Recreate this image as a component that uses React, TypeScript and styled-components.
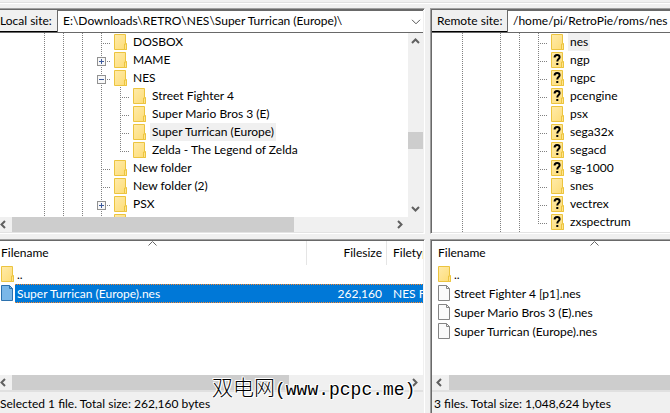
import React from "react";
import styled, { createGlobalStyle, css } from "styled-components";

const GlobalStyle = createGlobalStyle`
  * { box-sizing: border-box; }
  body {
    margin: 0;
    background: #f0f0f0;
    color: #000;
    font: 12px/18px Lato, "Open Sans", sans-serif;
  }
  button, select { font: inherit; color: inherit; }
`;

const Window = styled.main`
  position: relative;
  display: flex;
  flex-direction: column;
  min-height: 100vh;
  overflow: hidden;
`;

const ToolbarEdge = styled.div`
  height: 4px;
  margin-bottom: 4px;
  background: #fff;
  border-top: 2px solid #f0f0f0;
  box-shadow: inset 0 1px #e0e0e0;
`;

const Panes = styled.div`
  flex: 1;
  display: grid;
  grid-template-columns: minmax(0, 425fr) minmax(0, 240fr);
  grid-template-rows: auto 1fr;
  gap: 5px;
`;

const Pane = styled.section<{ $edge?: boolean }>`
  display: flex;
  flex-direction: column;
  min-width: 0;
  overflow: hidden;
  border-top: 1px solid #a0a0a0;
  box-shadow: inset 0 1px #696969;
  padding-top: 1px;
  border-bottom: 1px solid #fff;
  ${(p) =>
    p.$edge
      ? css`
          border-left: 1px solid #a0a0a0;
          box-shadow: inset 1px 1px #696969;
          padding-left: 1px;
        `
      : css`
          border-right: 1px solid #fff;
          padding-right: 1px;
        `}
`;

const ListPane = styled(Pane)`
  border-bottom: 0;
`;

const SiteBar = styled.div`
  display: flex;
  height: 23px;
  border-bottom: 1px solid #696969;
`;

const SiteLabel = styled.label<{ $inset?: boolean }>`
  flex: none;
  width: ${(p) => (p.$inset ? 75 : 57)}px;
  padding-left: ${(p) => (p.$inset ? 5 : 0)}px;
  line-height: 22px;
  background: #f0f0f0;
  box-shadow: inset 0 -1px #000;
  white-space: nowrap;
`;

const Combo = styled.div`
  position: relative;
  flex: 1;
  min-width: 0;
  display: flex;
  background: #fff;
  border-left: 1px solid #696969;
  box-shadow: inset 0 1px #696969;
`;

const PathSelect = styled.select`
  appearance: none;
  flex: 1;
  min-width: 0;
  border: 0;
  outline: 0;
  padding: 0 0 0 5px;
  height: 22px;
  line-height: 22px;
  background: transparent;
`;

const ComboArrow = styled.svg`
  position: absolute;
  right: 2px;
  top: 9px;
  pointer-events: none;
`;

const TreeArea = styled.div<{ $bars?: boolean }>`
  display: grid;
  grid-template-columns: minmax(0, 1fr) ${(p) => (p.$bars ? "15px" : "")};
  grid-template-rows: ${(p) => (p.$bars ? "184px 15px" : "199px")};
  background: #fff;
  border-bottom: 1px solid #e3e3e3;
`;

const Tree = styled.ul<{ $indent: number }>`
  margin: 0;
  padding: 0 0 0 ${(p) => p.$indent}px;
  list-style: none;
  overflow: hidden;
`;

const TreeRow = styled.li`
  display: flex;
  height: 18px;
  white-space: nowrap;
`;

const vDots = "repeating-linear-gradient(to bottom, #808080 0 1px, transparent 1px 2px)";
const hDots = "repeating-linear-gradient(to right, #808080 0 1px, transparent 1px 2px)";

/* b: blank, g: guide, t: branch, l: last branch */
const Guide = styled.span<{ $kind: string }>`
  flex: none;
  width: 19px;
  padding: 6px 0 0 5px;
  line-height: 0;
  background-repeat: no-repeat;
  ${(p) =>
    p.$kind === "g" &&
    css`
      background-image: ${vDots};
      background-size: 1px 100%;
      background-position: 9px 0;
    `}
  ${(p) =>
    (p.$kind === "t" || p.$kind === "l") &&
    css`
      background-image: ${vDots}, ${hDots};
      background-size: 1px ${p.$kind === "t" ? "100%" : "11px"}, 10px 1px;
      background-position: 9px 0, 9px 10px;
    `}
`;

const Toggle = styled.button`
  display: block;
  width: 9px;
  height: 9px;
  padding: 0;
  border: 0;
  background: #fff;
  line-height: 0;
`;

const IconCell = styled.span`
  flex: none;
  width: 20px;
  padding: 1px 0 0 3px;
  line-height: 0;
`;

const TreeLabel = styled.span<{ $on?: boolean }>`
  padding: 0 2px;
  background: ${(p) => (p.$on ? "#f0f0f0" : "transparent")};
`;

const Bar = styled.div<{ $vertical?: boolean }>`
  display: flex;
  flex: none;
  flex-direction: ${(p) => (p.$vertical ? "column" : "row")};
  ${(p) => (p.$vertical ? "width" : "height")}: 15px;
  background: #f0f0f0;
  overflow: hidden;
`;

const Corner = styled.div`
  background: #f0f0f0;
`;

const Step = styled.button<{ $size: number; $start?: boolean }>`
  display: flex;
  flex: 0 0 ${(p) => p.$size}px;
  align-items: center;
  justify-content: ${(p) => (p.$start ? "flex-start" : "center")};
  padding: 0;
  border: 0;
  background: transparent;
`;

const Track = styled.div<{ $before: number; $thumb: number; $after: number; $vertical?: boolean }>`
  flex: 1;
  display: grid;
  ${(p) => (p.$vertical ? "grid-template-rows" : "grid-template-columns")}:
    ${(p) => p.$before}fr ${(p) => p.$thumb}fr ${(p) => p.$after}fr;
`;

const Thumb = styled.div<{ $vertical?: boolean }>`
  background: #cdcdcd;
  ${(p) => (p.$vertical ? "grid-row" : "grid-column")}: 2;
`;

const ListArea = styled.div`
  flex: 1;
  position: relative;
  background: #fff;
  overflow: hidden;
`;

const FileTable = styled.table`
  width: 100%;
  min-width: 323px;
  table-layout: fixed;
  border-collapse: collapse;
`;

const Col = styled.col<{ $w?: number }>`
  width: ${(p) => (p.$w ? `${p.$w}px` : "auto")};
`;

const Head = styled.th<{ $pad: number; $right?: boolean; $line?: boolean }>`
  position: relative;
  height: 24px;
  padding: 0 5px 0 ${(p) => p.$pad}px;
  font-weight: 400;
  text-align: ${(p) => (p.$right ? "right" : "left")};
  white-space: nowrap;
  box-shadow: ${(p) => (p.$line ? "inset -1px 0 #e5e5e5" : "none")};
`;

const SortMark = styled.svg<{ $shift?: boolean }>`
  position: absolute;
  top: 0;
  left: calc(50% - ${(p) => (p.$shift ? 6 : 4)}px);
`;

const selected = css`
  color: #fff;
  background:
    repeating-linear-gradient(to right, #ff8728 0 1px, #0078d7 1px 2px) 0 0 / 100% 1px no-repeat,
    repeating-linear-gradient(to right, #ff8728 0 1px, #0078d7 1px 2px) 0 100% / 100% 1px no-repeat,
    #0078d7;
`;

const Cell = styled.td<{ $pad?: number; $right?: boolean; $on?: boolean }>`
  height: 19px;
  padding: 0 ${(p) => (p.$right ? 5 : 0)}px 0 ${(p) => p.$pad ?? 0}px;
  text-align: ${(p) => (p.$right ? "right" : "left")};
  white-space: nowrap;
  overflow: hidden;
  ${(p) => p.$on && selected}
`;

const FileLine = styled.div`
  display: flex;
  height: 19px;
`;

const FileIcon = styled.span`
  flex: none;
  width: 14px;
  padding-top: 1px;
  line-height: 0;
`;

const FileName = styled.span<{ $on?: boolean }>`
  flex: 1;
  padding-left: 2px;
  line-height: 19px;
  ${(p) => p.$on && selected}
`;

const Status = styled.footer<{ $inset?: boolean }>`
  height: 23px;
  padding: 3px 0 0 ${(p) => (p.$inset ? 2 : 0)}px;
  border-top: 2px solid #e0e0e0;
  background: #f0f0f0;
  white-space: nowrap;
`;

const Watermark = styled.div`
  position: absolute;
  left: 212px;
  bottom: 10px;
  font: 300 21px/26px "Noto Sans CJK SC", sans-serif;
  white-space: nowrap;
  text-shadow: 1px 0 #fff, -1px 0 #fff, 0 1px #fff, 0 -1px #fff, 1px 1px #fff, -1px -1px #fff;
  pointer-events: none;
`;

const WatermarkUrl = styled.span`
  font: 18px/26px "Liberation Mono", monospace;
`;

const Folder = ({ unknown = false }: { unknown?: boolean }) => (
  <svg width="13" height="16" viewBox="0 0 13 16">
    <defs>
      <linearGradient id="folder" x1="0" y1="0" x2="1" y2="1">
        <stop offset="0" stopColor="#ffebaa" />
        <stop offset="1" stopColor="#fddc75" />
      </linearGradient>
    </defs>
    <path d="M.5.5h11v9h1v6H.5z" fill="url(#folder)" stroke="#ecc43f" />
    <path d="M10.5 15.5v-5.5h2v5.5z" fill="#ffe48c" stroke="#ecc43f" />
    {unknown && (
      <path
        d="M3.6 5.6C3.6 3.6 4.7 3 6.1 3c1.500 0 2.500.8 2.500 2.200 0 1.900-2.300 1.800-2.300 4.300M5.300 12h2"
        fill="none"
        stroke="#000"
        strokeWidth="2"
      />
    )}
  </svg>
);

const Page = ({ on = false }: { on?: boolean }) => (
  <svg width="12" height="16" viewBox="0 0 12 16">
    <path d="M.5.5h8l3 3v12H.5z" fill={on ? "#7ab7e8" : "#fafafa"} stroke={on ? "#2c71ad" : "#858585"} />
    <path d="M8.500.5v3h3" fill="none" stroke={on ? "#2c71ad" : "#858585"} />
  </svg>
);

const PlusMinus = ({ open }: { open: boolean }) => (
  <svg width="9" height="9" viewBox="0 0 9 9" shapeRendering="crispEdges">
    <rect x=".5" y=".5" width="8" height="8" fill="#f8f8f8" stroke="#919191" />
    <path d={open ? "M2 4.500h5" : "M2 4.500h5M4.500 2v5"} stroke="#3d5a9c" />
  </svg>
);

const arrows = {
  up: "M1 6l3.500-3.500L8 6",
  down: "M1 3l3.500 3.500L8 3",
  left: "M5 1L1.500 4.500 5 8",
  right: "M3 1l3.500 3.500L3 8",
};

const Arrow = ({ dir }: { dir: keyof typeof arrows }) => (
  <svg width="9" height="9" viewBox="0 0 9 9">
    <path d={arrows[dir]} fill="none" stroke="#606060" strokeWidth="2" />
  </svg>
);

type Node = { g: string; name: string; unknown?: boolean; on?: boolean; open?: boolean };

const localTree: Node[] = [
  { g: "gggt", name: "DOSBOX" },
  { g: "gggt", name: "MAME", open: false },
  { g: "gggt", name: "NES", open: true },
  { g: "ggggt", name: "Street Fighter 4" },
  { g: "ggggt", name: "Super Mario Bros 3 (E)" },
  { g: "ggggt", name: "Super Turrican (Europe)", on: true },
  { g: "ggggl", name: "Zelda - The Legend of Zelda" },
  { g: "gggt", name: "New folder" },
  { g: "gggt", name: "New folder (2)" },
  { g: "gggt", name: "PSX", open: false },
  { g: "gggt", name: "" },
];

const remoteTree: Node[] = [
  { g: "gbggt", name: "nes", on: true },
  { g: "gbggt", name: "ngp", unknown: true },
  { g: "gbggt", name: "ngpc", unknown: true },
  { g: "gbggt", name: "pcengine", unknown: true },
  { g: "gbggt", name: "psx" },
  { g: "gbggt", name: "sega32x", unknown: true },
  { g: "gbggt", name: "segacd", unknown: true },
  { g: "gbggt", name: "sg-1000", unknown: true },
  { g: "gbggt", name: "snes" },
  { g: "gbggt", name: "vectrex", unknown: true },
  { g: "gbggl", name: "zxspectrum", unknown: true },
  { g: "gbgt", name: "" },
];

const TreeView = ({ nodes, indent }: { nodes: Node[]; indent: number }) => (
  <Tree $indent={indent}>
    {nodes.map((n, i) => (
      <TreeRow key={i}>
        {[...n.g].map((kind, k) => (
          <Guide key={k} $kind={kind}>
            {n.open !== undefined && k === n.g.length - 1 && (
              <Toggle aria-label={`${n.open ? "Collapse" : "Expand"} ${n.name}`}>
                <PlusMinus open={n.open} />
              </Toggle>
            )}
          </Guide>
        ))}
        <IconCell>
          <Folder unknown={n.unknown} />
        </IconCell>
        <TreeLabel $on={n.on}>{n.name}</TreeLabel>
      </TreeRow>
    ))}
  </Tree>
);

const Site = ({ id, label, path, inset }: { id: string; label: string; path: string; inset?: boolean }) => (
  <SiteBar>
    <SiteLabel htmlFor={id} $inset={inset}>
      {label}
    </SiteLabel>
    <Combo>
      <PathSelect id={id}>
        <option>{path}</option>
      </PathSelect>
      {!inset && (
        <ComboArrow width="10" height="6" viewBox="0 0 10 6">
          <path d="M1 .8l4 4 4-4" fill="none" stroke="#555" />
        </ComboArrow>
      )}
    </Combo>
  </SiteBar>
);

const Sort = ({ shift }: { shift?: boolean }) => (
  <SortMark $shift={shift} width="9" height="5" viewBox="0 0 9 5">
    <path d="M.5 4.500l4-4 4 4" fill="none" stroke="#666" />
  </SortMark>
);

const remoteFiles = ["Street Fighter 4 [p1].nes", "Super Mario Bros 3 (E).nes", "Super Turrican (Europe).nes"];

export default function App() {
  return (
    <Window>
      <GlobalStyle />
      <ToolbarEdge />
      <Panes>
        <Pane>
          <Site id="local" label="Local site:" path="E:\Downloads\RETRO\NES\Super Turrican (Europe)\" />
          <TreeArea $bars>
            <TreeView nodes={localTree} indent={35} />
            <Bar $vertical>
              <Step $size={17} aria-label="Scroll up"><Arrow dir="up" /></Step>
              <Track $vertical $before={82} $thumb={17} $after={51}>
                <Thumb $vertical />
              </Track>
              <Step $size={17} aria-label="Scroll down"><Arrow dir="down" /></Step>
            </Bar>
            <Bar>
              <Step $size={12} $start aria-label="Scroll left"><Arrow dir="left" /></Step>
              <Track $before={0} $thumb={282} $after={97}>
                <Thumb />
              </Track>
              <Step $size={17} aria-label="Scroll right"><Arrow dir="right" /></Step>
            </Bar>
            <Corner />
          </TreeArea>
        </Pane>

        <Pane $edge>
          <Site id="remote" label="Remote site:" path="/home/pi/RetroPie/roms/nes" inset />
          <TreeArea>
            <TreeView nodes={remoteTree} indent={21} />
          </TreeArea>
        </Pane>

        <ListPane>
          <ListArea>
            <FileTable>
              <colgroup>
                <Col $w={307} />
                <Col $w={80} />
                <Col />
              </colgroup>
              <thead>
                <tr>
                  <Head $pad={1} $line>Filename<Sort shift /></Head>
                  <Head $pad={0} $right $line>Filesize</Head>
                  <Head $pad={6}>Filetype</Head>
                </tr>
              </thead>
              <tbody>
                <tr>
                  <Cell $pad={1}>
                    <FileLine><FileIcon><Folder /></FileIcon><FileName>..</FileName></FileLine>
                  </Cell>
                  <Cell />
                  <Cell />
                </tr>
                <tr>
                  <Cell $pad={1}>
                    <FileLine><FileIcon><Page on /></FileIcon><FileName $on>Super Turrican (Europe).nes</FileName></FileLine>
                  </Cell>
                  <Cell $right $on>262,160</Cell>
                  <Cell $pad={6} $on>NES File</Cell>
                </tr>
              </tbody>
            </FileTable>
          </ListArea>
          <Bar>
            <Step $size={12} $start aria-label="Scroll left"><Arrow dir="left" /></Step>
            <Track $before={0} $thumb={277} $after={117}>
              <Thumb />
            </Track>
            <Step $size={17} aria-label="Scroll right"><Arrow dir="right" /></Step>
          </Bar>
          <Status>Selected 1 file. Total size: 262,160 bytes</Status>
        </ListPane>

        <ListPane $edge>
          <ListArea>
            <FileTable>
              <thead>
                <tr><Head $pad={6}>Filename<Sort /></Head></tr>
              </thead>
              <tbody>
                <tr>
                  <Cell $pad={6}>
                    <FileLine><FileIcon><Folder /></FileIcon><FileName>..</FileName></FileLine>
                  </Cell>
                </tr>
                {remoteFiles.map((f) => (
                  <tr key={f}>
                    <Cell $pad={6}>
                      <FileLine><FileIcon><Page /></FileIcon><FileName>{f}</FileName></FileLine>
                    </Cell>
                  </tr>
                ))}
              </tbody>
            </FileTable>
          </ListArea>
          <Bar>
            <Step $size={17} aria-label="Scroll left"><Arrow dir="left" /></Step>
            <Track $before={0} $thumb={1} $after={0}>
              <Thumb />
            </Track>
          </Bar>
          <Status $inset>3 files. Total size: 1,048,624 bytes</Status>
        </ListPane>
      </Panes>
      <Watermark>
        双电网<WatermarkUrl>(www.pcpc.me)</WatermarkUrl>
      </Watermark>
    </Window>
  );
}
